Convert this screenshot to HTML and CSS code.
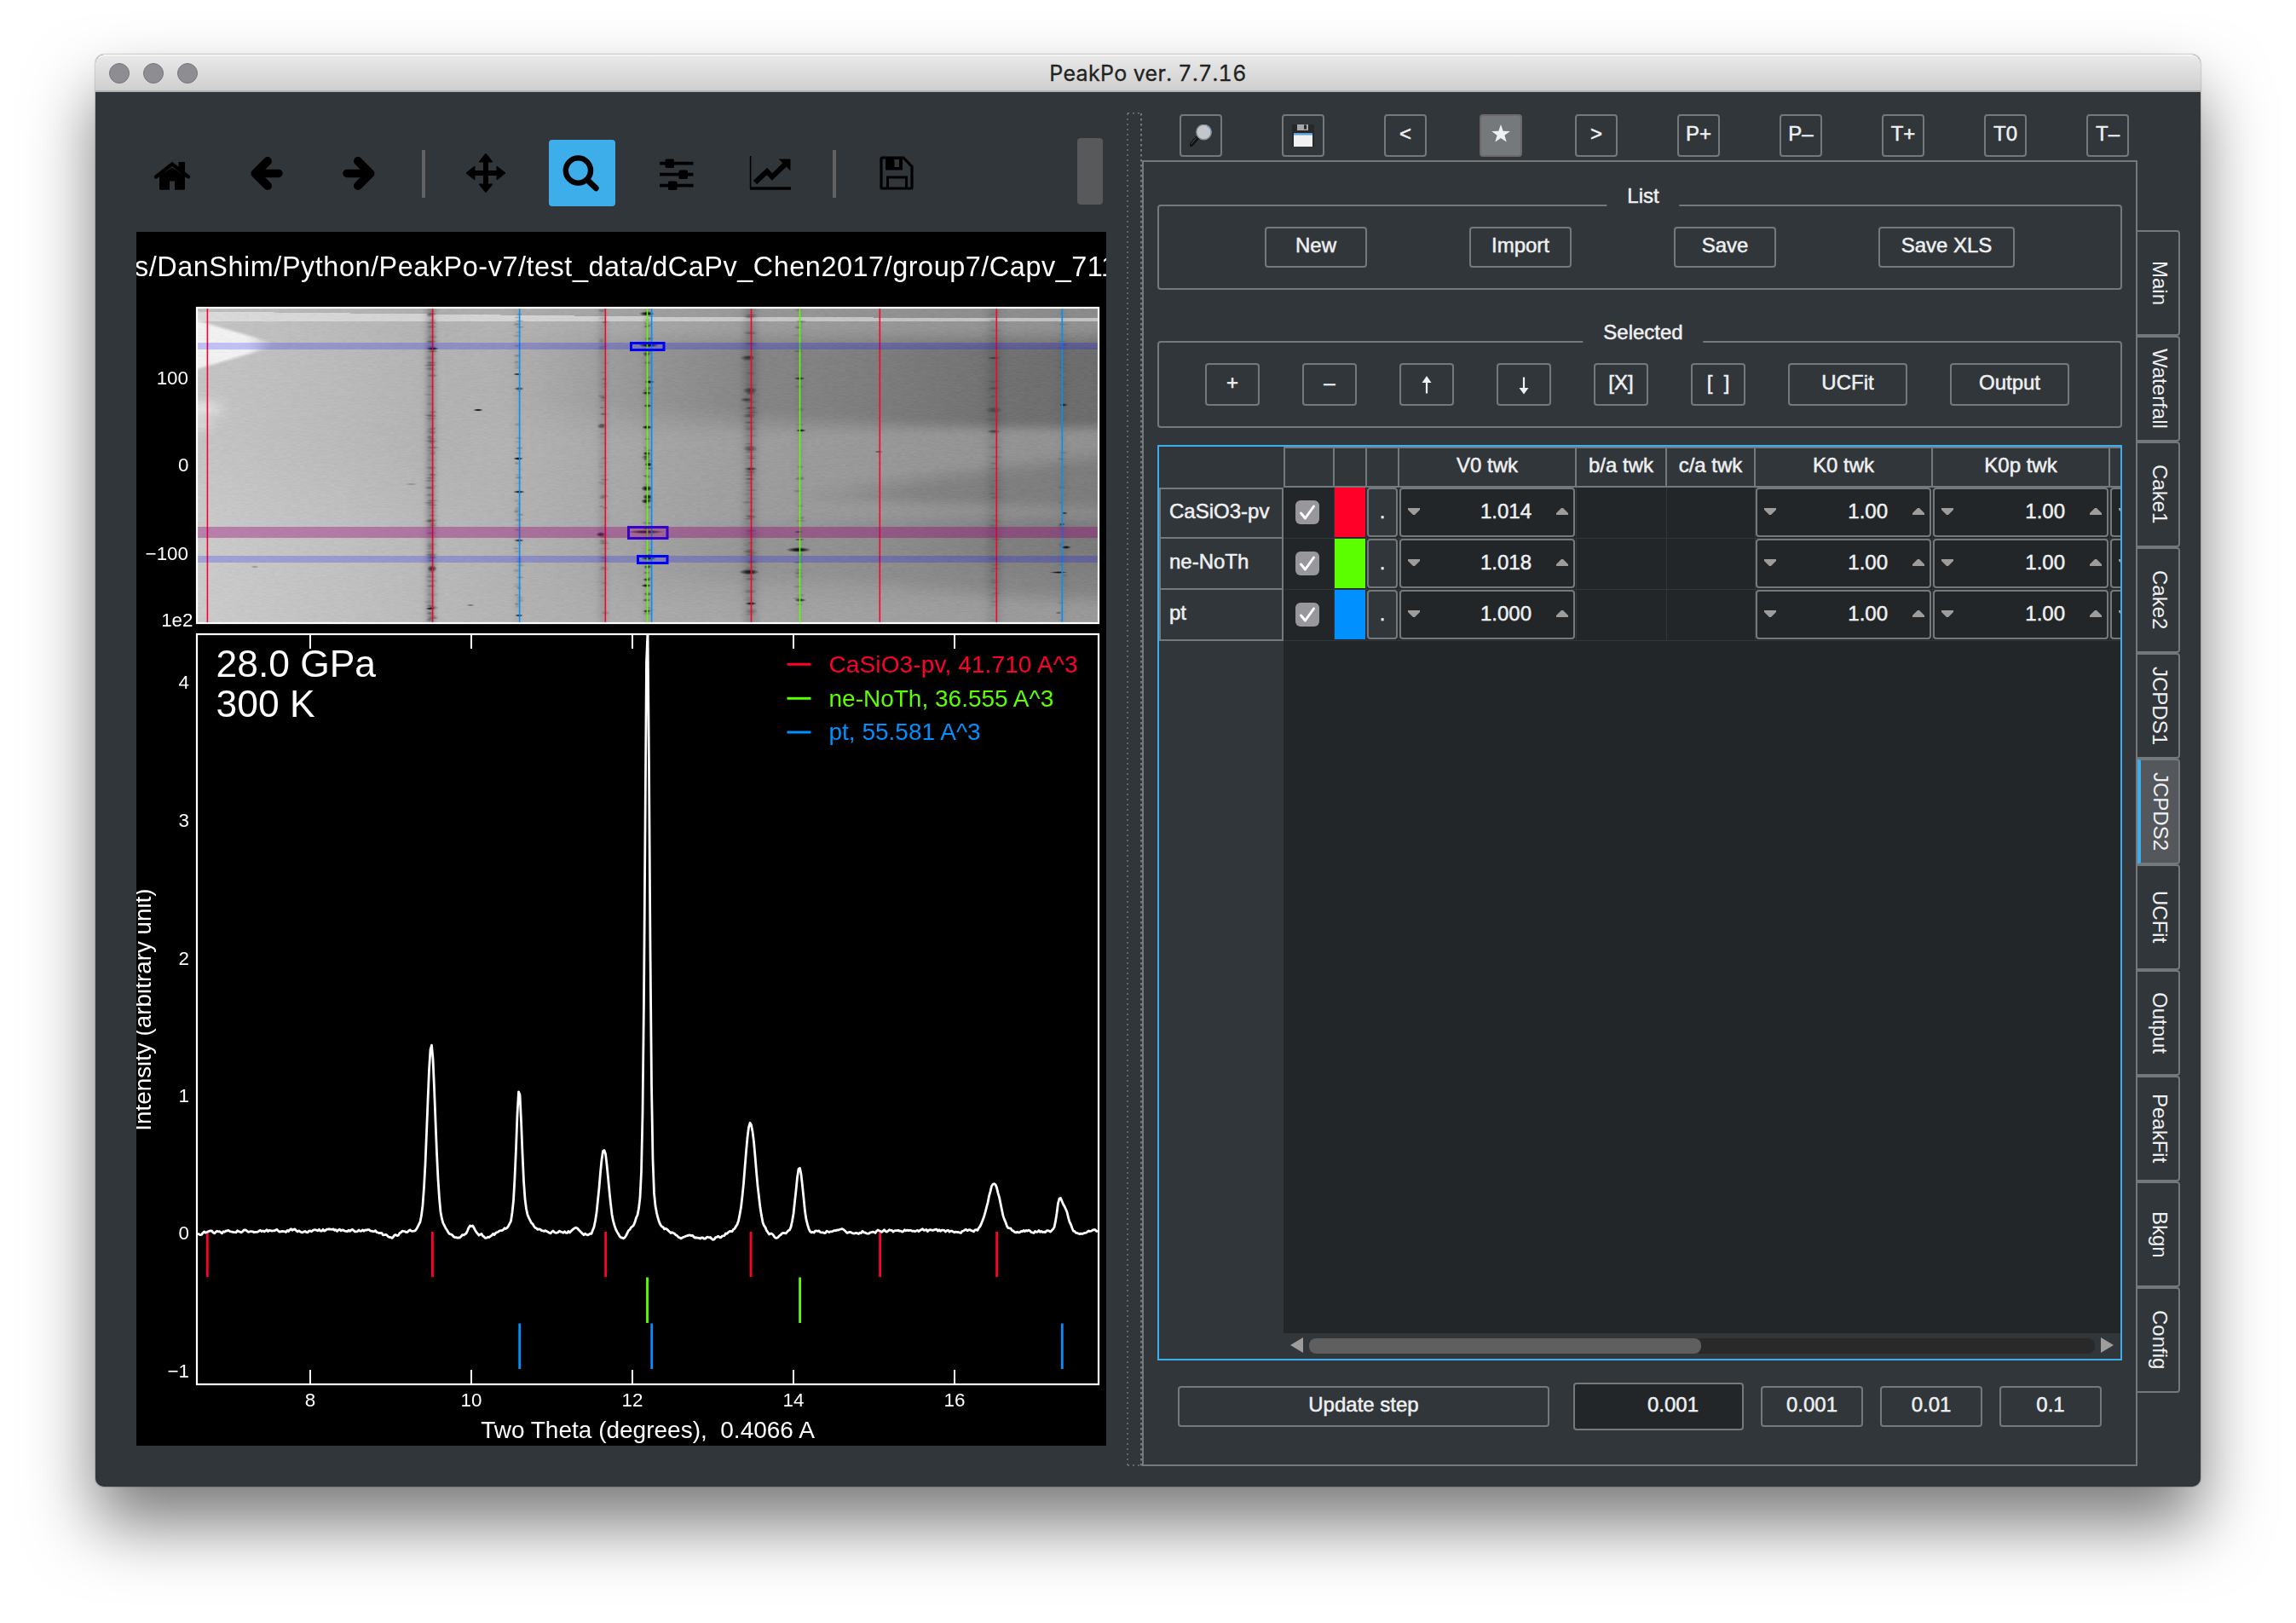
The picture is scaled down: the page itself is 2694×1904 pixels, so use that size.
FILE: index.html
```html
<!DOCTYPE html>
<html lang="en">
<head>
<meta charset="utf-8">
<title>PeakPo ver. 7.7.16</title>
<link rel="stylesheet" href="styles.css">
</head>
<body>
<div class="window">
  <header class="titlebar">
    <div class="lights"><i></i><i></i><i></i></div>
    <h1>PeakPo ver. 7.7.16</h1>
  </header>
  <div class="content">
    <section class="plot-pane">
      <nav class="mpl-toolbar">
        <svg class="tool home" viewBox="0 0 78 78"><path d="M20 43.5 39 28.5 58 43.5" fill="none" stroke="#000" stroke-width="4.4" stroke-linecap="round" stroke-linejoin="miter"/><path d="M46.5 26H54V38L46.5 33ZM24 42.5 39 32.5 54 42.5V57.5Q54 58.7 52.8 58.7H42V48.5H36V58.7H25.2Q24 58.7 24 57.5Z"/></svg>
        <svg class="tool back" viewBox="0 0 78 78"><g fill="none" stroke="#000" stroke-linecap="round"><path d="M40 25 25.5 39.5 40 54" stroke-width="10" stroke-linejoin="round"/><path d="M28 39.5H53" stroke-width="9.4"/></g></svg>
        <svg class="tool forward" viewBox="0 0 78 78"><g fill="none" stroke="#000" stroke-linecap="round"><path d="M38 25 52.5 39.5 38 54" stroke-width="10" stroke-linejoin="round"/><path d="M50 39.5H25" stroke-width="9.4"/></g></svg>
        <i class="sep sep-1"></i>
        <svg class="tool pan" viewBox="0 0 78 78"><path d="M39 20V58M20 39H58" stroke="#000" stroke-width="6" fill="none"/><path d="M39 16 47 26H31ZM39 62 47 52H31ZM16 39 26 31V47ZM62 39 52 31V47Z" stroke="#000" stroke-width="1" stroke-linejoin="round"/></svg>
        <svg class="tool zoom active" viewBox="0 0 78 78"><g fill="none" stroke="#000"><circle cx="34.4" cy="36" r="14.6" stroke-width="6.4"/><path d="M45.5 47.5 55.3 56.8" stroke-width="6.8" stroke-linecap="round"/></g></svg>
        <svg class="tool sliders" viewBox="0 0 78 78"><path d="M19 27.7H58.5M19 40.7H58.5M19 53.7H58.5" stroke="#000" stroke-width="3.8"/><rect x="25.5" y="22.5" width="10.5" height="10.4" rx="1.5"/><rect x="41.5" y="35.5" width="10.5" height="10.4" rx="1.5"/><rect x="29" y="48.5" width="10.5" height="10.4" rx="1.5"/></svg>
        <svg class="tool chart" viewBox="0 0 78 78"><path d="M15.6 19V58" stroke="#000" stroke-width="1.6"/><path d="M15 57H63" stroke="#000" stroke-width="3.4"/><path d="M21 50 35 37 41 43.5 57 28" fill="none" stroke="#000" stroke-width="6"/><path d="M49.5 23H62V35.5Z" stroke="#000" stroke-width="1" stroke-linejoin="round"/></svg>
        <i class="sep sep-2"></i>
        <svg class="tool save" viewBox="0 0 78 78"><path d="M22 21H47L57 31.500V56Q57 57 56 57H22Q21 57 21 56V22Q21 21 22 21Z" fill="none" stroke="#000" stroke-width="3.2"/><path d="M26 20H46V35.500H26ZM36.500 23V32H42V23Z" fill-rule="evenodd"/><path d="M28.500 57V44H50.500V57" fill="none" stroke="#000" stroke-width="3"/></svg>
        <i class="overflow"></i>
      </nav>
      <figure class="figure">
        <canvas id="cake" class="cake" width="1056" height="368"></canvas>
        <svg class="axes" viewBox="160 272 1138 1424" font-family="'Liberation Sans', Arial, sans-serif" fill="#fff">
          <text x="158" y="324" font-size="32.400" textLength="1152">s/DanShim/Python/PeakPo-v7/test_data/dCaPv_Chen2017/group7/Capv_711</text>

          <g stroke-width="1.600">
            <g stroke="#ff0029"><path d="M243.400 362V730M507.600 362V730M710.300 362V730M881.500 362V730M1032.300 362V730M1169.300 362V730"/></g>
            <g stroke="#5bff00"><path d="M759.500 362V730M938.500 362V730"/></g>
            <g stroke="#0090ff"><path d="M609.600 362V730M764.600 362V730M1246.300 362V730"/></g>
          </g>
          <g>
            <path d="M232 402H1288V410H232ZM232 652H1288V660H232Z" fill="#0000ff" fill-opacity=".2"/>
            <path d="M232 618H1288V631H232Z" fill="#960075" fill-opacity=".36"/>
            <g fill="none" stroke-width="3"><path d="M740.500 402.500H779V410.500H740.500ZM748.500 652.500H783V660.500H748.500Z" stroke="#0000ff"/><path d="M737.500 618.500H783V631.500H737.500Z" stroke="#3800cc"/></g>
          </g>
          <rect x="231" y="361" width="1058" height="370" fill="none" stroke="#fff" stroke-width="2.200"/>
          <g font-size="22.400" text-anchor="end">
            <text x="221" y="450.500">100</text><text x="221.500" y="553">0</text><text x="221" y="656.500">−100</text><text x="226.500" y="735">1e2</text>
          </g>

          <g stroke-width="2.800">
            <path d="M243.300 1445V1498M507.400 1445V1498M710.600 1445V1498M881 1445V1498M1032.600 1445V1498M1169.600 1445V1498" stroke="#ff0029"/>
            <path d="M759.500 1498.500V1552M938.600 1498.500V1552" stroke="#5bff00"/>
            <path d="M609.700 1552.500V1606M764.700 1552.500V1606M1246.300 1552.500V1606" stroke="#0090ff"/>
          </g>
          <clipPath id="axis-clip"><rect x="231" y="744" width="1058" height="880"/></clipPath>
          <path id="pattern" fill="none" stroke="#fff" stroke-width="2.800" stroke-linejoin="round" clip-path="url(#axis-clip)"/>
          <rect x="231" y="744" width="1058" height="880" fill="none" stroke="#fff" stroke-width="2.200"/>
          <path d="M364 745V761M553 745V761M742 745V761M931 745V761M1120 745V761M364 1607V1623M553 1607V1623M742 1607V1623M931 1607V1623M1120 1607V1623" stroke="#fff" stroke-width="2"/>
          <g font-size="22.400" text-anchor="end">
            <text x="222" y="808.300">4</text><text x="222" y="970">3</text><text x="222" y="1131.500">2</text><text x="222" y="1292.700">1</text><text x="222" y="1454">0</text><text x="222" y="1615.500">−1</text>
          </g>
          <g font-size="22.400" text-anchor="middle">
            <text x="364" y="1650">8</text><text x="553" y="1650">10</text><text x="742" y="1650">12</text><text x="931" y="1650">14</text><text x="1120" y="1650">16</text>
          </g>
          <text x="760" y="1687" font-size="28" text-anchor="middle" xml:space="preserve">Two Theta (degrees),  0.4066 A</text>
          <text transform="translate(177 1184.500) rotate(-90)" font-size="27.800" text-anchor="middle">Intensity (arbitrary unit)</text>
          <text x="253.500" y="794" font-size="44.400">28.0 GPa</text>
          <text x="253.500" y="840.700" font-size="44.400">300 K</text>
          <g font-size="28">
            <g fill="#ff0029"><path d="M923.500 777.800h28v3h-28z"/><text x="972.500" y="789" textLength="292">CaSiO3-pv, 41.710 A^3</text></g>
            <g fill="#5bff00"><path d="M923.500 817.800h28v3h-28z"/><text x="972.500" y="829">ne-NoTh, 36.555 A^3</text></g>
            <g fill="#0090ff"><path d="M923.500 857.500h28v3h-28z"/><text x="972.500" y="868">pt, 55.581 A^3</text></g>
          </g>
        </svg>
      </figure>
    </section>

    <svg class="splitter" viewBox="0 0 18 1588"><g fill="none" stroke="#76797c"><path d="M1 1V1588" stroke-width="1.400" stroke-dasharray="2 4"/><path d="M1 .7H18M1 1587H18" stroke-width="1.400" stroke-dasharray="2 4"/><path d="M17 1V1588" stroke-width="2" stroke-dasharray="2.500 3.500"/></g></svg>

    <section class="control-pane">
      <div class="quick">
        <button class="btn sq"><svg viewBox="0 0 26 26"><path d="M1.500 24 9 15.500" stroke="#111" stroke-width="4.600" stroke-linecap="round"/><path d="M1.500 23 8 15.500" stroke="#555" stroke-width="1"/><circle cx="16.500" cy="9" r="8.700" fill="#c4c6c9" stroke="#8a8d90" stroke-width="1.400"/><path d="M20 2A8.700 8.700 0 0 1 25 11" fill="none" stroke="#5b9bd8" stroke-width="1"/></svg></button>
        <button class="btn sq"><svg viewBox="0 0 26 26"><path d="M0 0H25L26 1V26H0Z" fill="#26282a"/><path d="M6 0H19V7H6Z" fill="#a6a8aa"/><path d="M14 .5H17V5.500H14Z" fill="#26282a"/><path d="M2 10H24V26H2Z" fill="#f1f1f2"/><path d="M2 10H24V12.500H2Z" fill="#5f9fdc"/></svg></button>
        <button class="btn sq">&lt;</button>
        <button class="btn sq star"><svg viewBox="0 0 26 26"><path d="M13 2 15.700 9.700 23.800 9.900 17.400 14.800 19.700 22.600 13 18 6.300 22.600 8.600 14.800 2.200 9.900 10.300 9.700Z" fill="#eff0f1"/></svg></button>
        <button class="btn sq">&gt;</button>
        <button class="btn sq">P+</button>
        <button class="btn sq">P–</button>
        <button class="btn sq">T+</button>
        <button class="btn sq">T0</button>
        <button class="btn sq">T–</button>
      </div>
      <div class="tabbed">
        <div class="page">
          <section class="group list">
            <h2>List</h2>
            <button class="btn">New</button><button class="btn">Import</button><button class="btn">Save</button><button class="btn xls">Save XLS</button>
          </section>
          <section class="group selected">
            <h2>Selected</h2>
            <button class="btn">+</button><button class="btn">–</button>
            <button class="btn"><svg viewBox="0 0 26 26"><path d="M13 23.500V7" stroke="#eff0f1" stroke-width="2.200"/><path d="M13 3 18.500 11H7.500Z" fill="#eff0f1"/></svg></button>
            <button class="btn"><svg viewBox="0 0 26 26"><path d="M13 4.500V20" stroke="#eff0f1" stroke-width="2.200"/><path d="M13 24.500 18.500 17H7.500Z" fill="#eff0f1"/></svg></button>
            <button class="btn">[X]</button><button class="btn">[&nbsp; ]</button>
            <button class="btn wide">UCFit</button><button class="btn wide">Output</button>
          </section>
          <div class="table">
            <div class="grid">
              <div class="corner"></div><div class="th first"></div><div class="th"></div><div class="th"></div><div class="th">V0 twk</div><div class="th">b/a twk</div><div class="th">c/a twk</div><div class="th">K0 twk</div><div class="th">K0p twk</div><div class="th"></div>

              <div class="rh top">CaSiO3-pv</div><div class="td check"><svg viewBox="0 0 28 28"><path d="M6.500 15 11.500 21 21.500 7" /></svg></div><div class="td"><i class="swatch red"></i></div><div class="td"><button class="dot">.</button></div><div class="td"><div class="spin"><i></i><b>1.014</b><i class="up"></i></div></div><div class="td"></div><div class="td"></div><div class="td"><div class="spin"><i></i><b>1.00</b><i class="up"></i></div></div><div class="td"><div class="spin"><i></i><b>1.00</b><i class="up"></i></div></div><div class="td"><div class="spin"><i></i></div></div>

              <div class="rh">ne-NoTh</div><div class="td check"><svg viewBox="0 0 28 28"><path d="M6.500 15 11.500 21 21.500 7" /></svg></div><div class="td"><i class="swatch green"></i></div><div class="td"><button class="dot">.</button></div><div class="td"><div class="spin"><i></i><b>1.018</b><i class="up"></i></div></div><div class="td"></div><div class="td"></div><div class="td"><div class="spin"><i></i><b>1.00</b><i class="up"></i></div></div><div class="td"><div class="spin"><i></i><b>1.00</b><i class="up"></i></div></div><div class="td"><div class="spin"><i></i></div></div>

              <div class="rh">pt</div><div class="td check"><svg viewBox="0 0 28 28"><path d="M6.500 15 11.500 21 21.500 7" /></svg></div><div class="td"><i class="swatch blue"></i></div><div class="td"><button class="dot">.</button></div><div class="td"><div class="spin"><i></i><b>1.000</b><i class="up"></i></div></div><div class="td"></div><div class="td"></div><div class="td"><div class="spin"><i></i><b>1.00</b><i class="up"></i></div></div><div class="td"><div class="spin"><i></i><b>1.00</b><i class="up"></i></div></div><div class="td"><div class="spin"><i></i></div></div>
            </div>
            <div class="scrollbar">
              <svg viewBox="0 0 16 20"><path d="M0 10 15 1V19Z"/></svg>
              <div class="track"><div class="thumb"></div></div>
              <svg viewBox="0 0 16 20"><path d="M16 10 1 1V19Z"/></svg>
            </div>
          </div>
          <div class="steps">
            <button class="btn update">Update step</button>
            <div class="field">0.001</div>
            <button class="btn">0.001</button><button class="btn">0.01</button><button class="btn">0.1</button>
          </div>
        </div>
        <nav class="tabs">
          <span>Main</span><span>Waterfall</span><span>Cake1</span><span>Cake2</span><span>JCPDS1</span><span class="on">JCPDS2</span><span>UCFit</span><span>Output</span><span>PeakFit</span><span>Bkgn</span><span>Config</span>
        </nav>
      </div>
    </section>
  </div>
</div>
<script src="plot.js"></script>
</body>
</html>
```
FILE: styles.css
```css
* { box-sizing: border-box; }
html, body { margin: 0; background: #fff; }
body { width: 2694px; height: 1904px; overflow: hidden; padding: 64px 112px; font-family: "Liberation Sans", Arial, sans-serif; font-size: 24px; color: #eff0f1; }

.window { width: 2470px; height: 1680px; border-radius: 10px; background: #31363b; box-shadow: 0 0 2px rgba(0,0,0,.5), 0 44px 80px rgba(0,0,0,.52); display: flex; flex-direction: column; }
.titlebar { height: 44px; border-radius: 10px 10px 0 0; background: linear-gradient(#e9e9e9, #cfcfcf); border-top: 2px solid #f4f4f4; border-bottom: 2px solid #b2b2b2; display: grid; grid-template-columns: 1fr auto 1fr; align-items: center; }
.titlebar h1 { margin: 0; font: 400 25px Inter, sans-serif; color: #222; line-height: 40px; letter-spacing: .35px; font-feature-settings: "tnum", "calt" 0; -webkit-text-stroke: .3px #222; }
.lights { display: flex; gap: 16px; padding-left: 16px; }
.lights i { width: 24px; height: 24px; border-radius: 50%; background: #8e8d92; border: 1px solid #77767b; }
.content { flex: 1; display: flex; align-items: flex-start; }

/* left: matplotlib toolbar and figure */
.plot-pane { width: 1138px; margin-left: 48px; }
.mpl-toolbar { height: 164px; padding-top: 56px; display: flex; align-items: flex-start; }
.tool { width: 78px; height: 78px; flex: none; border-radius: 4px; }
.tool.active { background: #3daee9; }
.home { margin-left: 3px; }
.back { margin-left: 33px; }
.forward { margin-left: 30px; }
.pan { margin-left: 32px; }
.zoom { margin-left: 35px; }
.sliders { margin-left: 33px; }
.chart { margin-left: 32px; }
.save { margin-left: 32px; }
.sep { width: 4px; height: 56px; margin-top: 12px; background: #626262; }
.sep-1 { margin-left: 35px; }
.sep-2 { margin-left: 34px; }
.overflow { width: 30px; height: 78px; margin: -2px 4px 0 auto; border-radius: 4px; background: #58595b; }
.figure { position: relative; margin: 0; width: 1138px; height: 1424px; background: #000; overflow: hidden; }
.cake { position: absolute; left: 72px; top: 90px; }
.axes { position: absolute; inset: 0; width: 1138px; height: 1424px; }

.splitter { width: 18px; height: 1588px; margin: 24px 0 0 24px; flex: none; }

/* right: controls */
.control-pane { width: 1242px; padding-top: 26px; -webkit-text-stroke: .5px #eff0f1; }
.btn { font: inherit; color: inherit; -webkit-text-stroke: inherit; background: #31363b; border: 2px solid #76797c; border-radius: 4px; padding: 0 0 5px; height: 48px; width: 120px; display: flex; align-items: center; justify-content: center; white-space: nowrap; flex: none; }
.btn svg { width: 26px; height: 26px; margin-top: 4px; }
.quick { display: flex; padding-left: 44px; gap: 70px; height: 54px; }
.btn.sq { width: 50px; height: 50px; }
.btn.star { background: #75797c; border-color: #6d6867; margin: 0 -8px; }
.btn.star svg { margin-top: 0; }
.tabbed { display: flex; align-items: flex-start; }
.page { width: 1168px; height: 1532px; border: 2px solid #76797c; padding: 50px 16px 0; }

.group { position: relative; border: 2px solid #76797c; border-radius: 4px; display: flex; }
.group h2 { position: absolute; top: -26px; left: 50%; transform: translateX(calc(-50% + 4px)); margin: 0; height: 26px; line-height: 28px; padding: 0 24px; font-size: 24px; font-weight: 400; background: #31363b; }
.list { height: 100px; padding: 24px 0 0 124px; gap: 120px; }
.btn.xls { width: 160px; }
.selected { height: 102px; margin-top: 60px; padding: 24px 0 0 54px; gap: 50px; }
.selected .btn { height: 50px; width: 64px; }
.selected .btn.wide { width: 140px; }

.table { margin-top: 20px; height: 1074px; border: 2px solid #3daee9; background: linear-gradient(to right, #31363b 146px, #232629 146px); overflow: hidden; display: flex; flex-direction: column; justify-content: space-between; }
.grid { display: grid; grid-template-columns: 146px 60px 38px 38px 208px 106px 104px 208px 208px 208px; grid-template-rows: 48px 60px 60px 60px; }
.th { background: #31363b; border: 2px solid #76797c; border-left: 0; padding-bottom: 5px; display: flex; align-items: center; justify-content: center; white-space: nowrap; }
.th.first { border-left: 2px solid #76797c; }
.rh { border: 2px solid #76797c; border-top: 0; padding: 0 0 4px 10px; display: flex; align-items: center; }
.rh.top { border-top: 2px solid #76797c; }
.td { border-right: 1px solid #31363b; border-bottom: 1px solid #31363b; padding: 0 1px 1px 0; display: flex; }
.td.check { align-items: center; padding: 0 0 2px 14px; }
.check svg { width: 28px; height: 28px; border-radius: 6px; background: #98979c; }
.check path { fill: none; stroke: #fff; stroke-width: 3; stroke-linecap: round; stroke-linejoin: round; }
.swatch { flex: 1; }
.red { background: #ff0029; }
.green { background: #5bff00; }
.blue { background: #0090ff; }
.dot { flex: 1; font: inherit; color: inherit; border: 2px solid #76797c; border-radius: 4px; background: #31363b; padding: 0 0 3px; }
.spin { flex: 1; border: 2px solid #76797c; border-radius: 4px; display: flex; align-items: center; padding: 0 6px 2px 8px; }
.spin b { flex: 1; font-weight: 400; text-align: right; padding: 0 29px 1px 0; }
.spin i { width: 14px; height: 8px; background: #9f9d9b; clip-path: polygon(0 0, 100% 0, 100% 25%, 57% 100%, 43% 100%, 0 25%); }
.spin i.up { clip-path: polygon(43% 0, 57% 0, 100% 75%, 100% 100%, 0 100%, 0 75%); }
.scrollbar { margin-left: 146px; height: 30px; background: #31363b; display: flex; padding: 4px 8px 0 8px; }
.scrollbar svg { width: 16px; height: 20px; fill: #9f9d9b; }
.track { flex: 1; height: 18px; margin: 2px 6px 0; border-radius: 8px; background: #2a2929; }
.thumb { width: 460px; height: 18px; border-radius: 8px; background: #605f5f; }

.steps { display: flex; align-items: center; margin-top: 26px; padding-left: 24px; gap: 20px; }
.btn.update { width: 436px; margin-right: 8px; }
.field { width: 200px; height: 56px; border: 2px solid #76797c; border-radius: 4px; background: #232629; line-height: 48px; text-align: right; padding-right: 51px; }

.tabs { margin-top: 82px; width: 50px; }
.tabs span { display: flex; align-items: center; justify-content: center; width: 50px; height: 124px; border: 2px solid #76797c; border-left: 0; border-radius: 0 4px 4px 0; writing-mode: vertical-rl; padding-left: 3px; -webkit-text-stroke: 0; }
.tabs .on { background: #54575b; border-left: 4px solid #3daee9; padding-left: 2px; }
```
FILE: plot.js
```js
// Deterministic pseudo-random numbers so that the noise is stable.
let seed = 7716;
function rnd() {
  seed = (seed * 1664525 + 1013904223) >>> 0;
  return seed / 4294967296;
}
function gauss(d, hwhm) { return Math.exp(-Math.LN2 * d * d / (hwhm * hwhm)); }
function lorentz(d, hwhm) { return 1 / (1 + d * d / (hwhm * hwhm)); }
function smooth(a, b, v) {
  const t = Math.min(1, Math.max(0, (v - a) / (b - a)));
  return t * t * (3 - 2 * t);
}
function interp(points, v) {
  for (let i = 1; i < points.length; i++) {
    if (v <= points[i][0]) {
      const [x0, y0] = points[i - 1], [x1, y1] = points[i];
      return y0 + (y1 - y0) * (v - x0) / (x1 - x0);
    }
  }
  return points[points.length - 1][1];
}

// Integrated pattern: [centre, height, half width, Lorentz fraction]
const peaks = [
  [506, 221, 5.8, .22], [609, 163, 4.1, .45], [618, 10, 9, 0], [708.8, 96, 6.3, .05],
  [759.5, 718, 3.3, .38], [880.6, 128, 7.6, .15], [937.8, 74, 5.2, .1],
  [1166.6, 56, 8.6, .1], [1242.6, 26, 3.4, 0], [1249, 26, 6, .1],
  [553, 8, 3.5, 0], [677, 6, 4, 0],
  [458, -6, 9, 0], [537, -7, 9, 0], [573, -7, 8, 0], [731, -9, 8, 0], [693, -5, 6, 0],
  [800, -7, 14, 0], [835, -8, 15, 0], [911, -7, 8, 0], [1270, -3, 6, 0]
];
let d = '', walk = 0;
for (let x = 232; x <= 1289; x += 1.5) {
  let h = interp([[232, -1], [300, 2], [400, 2], [480, -1], [960, 0], [1070, 1.5], [1289, 0]], x);
  for (const [c, a, w, eta] of peaks) h += a * (eta * lorentz(x - c, w) + (1 - eta) * gauss(x - c, w));
  walk = walk * .6 + (rnd() - .5) * 3;
  d += (d ? 'L' : 'M') + x.toFixed(1) + ' ' + (1445.5 - h - walk).toFixed(1);
}
document.getElementById('pattern').setAttribute('d', d);

// Unrolled detector image, in figure coordinates offset by (232, 362).
const cake = document.getElementById('cake');
const ctx = cake.getContext('2d');
const W = cake.width, H = cake.height;
const img = ctx.createImageData(W, H);
const base = [[232, 202], [400, 192], [600, 178], [760, 165], [900, 156], [1100, 149], [1289, 144]];
// diffraction rings: [x, shade, half width]
const rings = [[505, 38, 5], [607, 6, 4], [707, 16, 5], [759, 14, 4], [880, 24, 7], [938, 6, 4], [1166, 14, 8], [1247, 5, 5]];
for (let py = 0; py < H; py++) {
  const y = py + 362;
  let streak = 0;
  for (let px = 0; px < W; px++) {
    const x = px + 232;
    let v = interp(base, x);
    const right = smooth(520, 1000, x);
    // bright foot of the image, darker waist
    v += 8 * smooth(680, 720, y) * right - 8 * smooth(600, 500, x) * smooth(650, 500, y) * .8;
    // broad shadow in the upper half
    const soft = 30 * (1 - smooth(600, 1200, x));
    const up = smooth(380, 415, y) * (1 - smooth(490 - soft, 512 + soft * .4, y));
    v -= up * (smooth(500, 920, x) * 24 + smooth(900, 1289, x) * 12);
    // wedge widening to the right
    const t = smooth(930, 1289, x);
    const top = 578 - (x - 900) * .12, bot = 582 + (x - 900) * .02;
    v -= 20 * smooth(880, 1120, x) * smooth(top - 12, top + 20, y) * (1 - smooth(bot - 6, bot + 14, y));
    v -= 8 * t * smooth(585, 605, y) * (1 - smooth(640, 690, y));
    // lower shadow
    const lowTop = 620 - 22 * right;
    v -= (8 + 6 * t) * smooth(620, 920, x) * smooth(lowTop, lowTop + 26, y) * (1 - smooth(668 + 20 * t, 692 + 25 * t, y));
    // gap between detector modules
    const edge = interp([[232, 365], [500, 368], [760, 371], [1289, 373]], x);
    if (y >= edge && y < 377) v += interp([[232, 22], [600, 34], [1289, 50]], x);
    if (y < edge) v -= 6;
    // beam stop shadow
    if (x < 322) {
      const half = 28 - (x - 232) * .29;
      v += (240 - v) * smooth(half + 3, half - 3, Math.abs(y - 404)) * smooth(324, 285, x);
      v += 28 * smooth(275, 235, x) * gauss(y - 479, 9) + 16 * smooth(260, 235, x) * gauss(y - 499, 7);
    }
    for (const [c, s, w] of rings) {
      const q = Math.abs(x - c);
      if (q < 26) v -= s * gauss(q, w);
    }
    if (px % 5 === 0) streak = (rnd() - .5) * 6;
    v += streak + (rnd() - .5) * 2;
    const k = (py * W + px) * 4;
    img.data[k] = img.data[k + 1] = img.data[k + 2] = Math.max(0, v);
    img.data[k + 3] = 255;
  }
}
ctx.putImageData(img, 0, 0);

// Single-crystal spots, as short horizontal smears.
function spot(x, y, half, alpha, thick) {
  ctx.save();
  ctx.translate(x - 232, y - 362);
  ctx.scale(half, thick);
  const g = ctx.createRadialGradient(0, 0, 0, 0, 0, 1);
  g.addColorStop(0, `rgba(0,0,0,${alpha})`);
  g.addColorStop(.4, `rgba(0,0,0,${alpha * .75})`);
  g.addColorStop(1, 'rgba(0,0,0,0)');
  ctx.fillStyle = g;
  ctx.beginPath();
  ctx.arc(0, 0, 1, 0, 7);
  ctx.fill();
  ctx.restore();
}
// [x, count, half width, alpha]
for (const [x, n, w, a] of [[506, 120, 7, .2], [608, 55, 5, .22], [708, 55, 6, .2], [760, 60, 5.5, .34], [880, 75, 8, .2], [938, 30, 6, .22], [1167, 44, 8, .12], [1247, 32, 5, .13]]) {
  for (let i = 0; i < n; i++) {
    spot(x + (rnd() - .5) * 5, 363 + rnd() * 366, w * (.6 + rnd() * .6), a * (.3 + rnd()), 1.2 + rnd() * 1.2);
  }
}
for (const s of [
  [561, 481, 6, 1, 1.6], [508, 409, 7, .9, 2], [608, 538, 6, .95, 1.8], [609, 577, 7, .95, 1.8], [609, 456, 6, .7, 2],
  [609, 634, 6, .8, 1.8], [609, 722, 5, .9, 1.6], [607, 439, 5, .8, 1.6], [705, 627, 6, .8, 3], [706, 500, 6, .5, 3],
  [507, 667, 6, .7, 4], [505, 714, 6, .9, 1.6], [552, 710, 5, .4, 1.5], [299, 665, 5, .3, 1.2], [483, 568, 8, .25, 1.2],
  [759, 368, 9, 1, 2.6], [761, 405, 12, 1, 2.4], [762, 448, 6, .9, 2], [759, 461, 6, .9, 2], [760, 476, 5, .8, 2],
  [759, 501, 6, .9, 2], [759, 532, 5, .9, 2.4], [761, 545, 5, .9, 2.6], [759, 573, 7, 1, 3.6], [760, 583, 6, 1, 3.4], [758, 588, 6, .9, 3],
  [758, 624, 22, .9, 2.2], [761, 655, 9, .9, 2], [759, 680, 5, .8, 2], [758, 687, 6, .9, 2], [759, 717, 5, .8, 2],
  [877, 420, 9, .5, 3.5], [880, 458, 9, .5, 4], [876, 469, 8, .5, 2.6], [881, 550, 8, .7, 2], [879, 671, 12, .85, 3.4], [881, 708, 7, .9, 2], [880, 526, 9, .4, 4],
  [938, 444, 7, .7, 2], [940, 505, 6, .9, 1.8], [937, 645, 15, 1, 3], [939, 704, 7, .8, 2], [937, 624, 5, .6, 1.6], [938, 633, 6, .5, 1.6],
  [1031, 530, 5, .5, 1.4], [1166, 420, 8, .4, 1.8], [1166, 506, 8, .5, 2.2], [1166, 481, 10, .3, 4],
  [1248, 475, 5, .7, 2], [1249, 602, 4, .7, 1.6], [1251, 642, 6, .9, 2], [1242, 671.500, 11, .9, 1.4], [1246, 615, 4, .6, 1.4], [1242, 719, 4, .4, 1.4]
]) spot(...s);
```
